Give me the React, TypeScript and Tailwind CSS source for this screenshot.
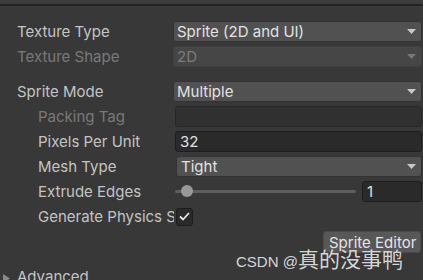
import React from "react";

const Arrow = ({ color }: { color: string }) => (
  <svg width="9" height="5" viewBox="0 0 9 5" className="shrink-0">
    <polygon points="0,0 9,0 4.5,5" fill={color} />
  </svg>
);

const Dropdown = ({ text, disabled, pl }: { text: string; disabled?: boolean; pl?: string }) => (
  <div
    className={
      "flex-1 mr-[1px] h-[21px] rounded-[3px] border flex items-center pr-[5px] " +
      (disabled
        ? "bg-[#464646] border-[#404040] text-[#7c7c7c]"
        : "bg-[#515151] border-[#333333] text-[#e2e2e2]") +
      " " +
      (pl ?? "pl-[3px]")
    }
  >
    <span className="flex-1 whitespace-nowrap">{text}</span>
    <Arrow color={disabled ? "#777777" : "#c8c8c8"} />
  </div>
);

const TextField = ({ text, dim }: { text: string; dim?: boolean }) => (
  <div
    className={
      "flex-1 mr-[1px] h-[21px] rounded-[3px] border flex items-center pl-[4px] text-[#e0e0e0] " +
      (dim ? "bg-[#303030] border-[#262626]" : "bg-[#2a2a2a] border-[#1d1d1d]")
    }
  >
    {text}
  </div>
);

export default function App() {
  return (
    <div
      className="relative w-[423px] h-[280px] overflow-hidden bg-[#383838] text-[15px] leading-[21px]"
      style={{ fontFamily: "Inter, 'Noto Sans', sans-serif" }}
    >
      <div className="h-[4px] bg-[#3c3c3c]" />
      <div className="h-[2px] bg-[#232323]" />

      <div className="pt-[15px] flex flex-col gap-[4px]">
        <div className="flex items-center h-[21px]">
          <div className="w-[173px] shrink-0 pl-[17px] text-[#c4c4c4] whitespace-nowrap">Texture Type</div>
          <Dropdown text="Sprite (2D and UI)" />
        </div>
        <div className="flex items-center h-[21px]">
          <div className="w-[173px] shrink-0 pl-[17px] text-[#7a7a7a] whitespace-nowrap">Texture Shape</div>
          <Dropdown text="2D" disabled />
        </div>
      </div>

      <div className="mt-[14px] flex flex-col gap-[4px]">
        <div className="flex items-center h-[21px]">
          <div className="w-[173px] shrink-0 pl-[17px] text-[#c4c4c4] whitespace-nowrap">Sprite Mode</div>
          <Dropdown text="Multiple" />
        </div>
        <div className="flex items-center h-[21px]">
          <div className="w-[175px] shrink-0 pl-[38px] text-[#7a7a7a] whitespace-nowrap">Packing Tag</div>
          <TextField text="" dim />
        </div>
        <div className="flex items-center h-[21px]">
          <div className="w-[175px] shrink-0 pl-[38px] text-[#c4c4c4] whitespace-nowrap">Pixels Per Unit</div>
          <TextField text="32" />
        </div>
        <div className="flex items-center h-[21px]">
          <div className="w-[176px] shrink-0 pl-[38px] text-[#c4c4c4] whitespace-nowrap">Mesh Type</div>
          <Dropdown text="Tight" pl="pl-[4px]" />
        </div>
        <div className="flex items-center h-[21px]">
          <div className="w-[175px] shrink-0 pl-[38px] text-[#c4c4c4] whitespace-nowrap">Extrude Edges</div>
          <div className="relative flex-1 h-[21px] flex items-center">
            <div className="w-full h-[3px] rounded-full bg-[#5e5e5e]" />
            <div className="absolute left-[6px] top-[4px] w-[12px] h-[12px] rounded-full bg-[#999999]" />
          </div>
          <div className="w-[60px] ml-[6px] mr-[1px] h-[21px] rounded-[3px] border bg-[#2a2a2a] border-[#1d1d1d] flex items-center pl-[4px] text-[#e0e0e0]">
            1
          </div>
        </div>
        <div className="flex items-center h-[21px]">
          <div className="w-[174px] shrink-0 pl-[38px] text-[#c4c4c4] whitespace-nowrap overflow-hidden">
            Generate Physics Shape
          </div>
          <div className="ml-[2px] w-[17px] h-[18px] rounded-[3px] border border-[#1d1d1d] bg-[#2a2a2a] flex items-center justify-center">
            <svg width="11" height="9" viewBox="0 0 11 9">
              <polyline points="1,4.5 4,7.5 10,1" fill="none" stroke="#e6e6e6" strokeWidth="1.8" />
            </svg>
          </div>
        </div>
        <div className="flex h-[22px]">
          <div className="ml-auto mr-[2px] w-[98px] h-[22px] rounded-[3px] bg-[#585858] border border-[#4a4a4a] flex items-center pl-[5px] text-[#e4e4e4] whitespace-nowrap">
            Sprite Editor
          </div>
        </div>
      </div>

      <div className="mt-[13px] flex items-center h-[21px]">
        <svg width="8" height="9" viewBox="0 0 8 9" className="ml-[3px] mt-[3px]">
          <polygon points="0,0 7,4.5 0,9" fill="#8a8a8a" />
        </svg>
        <span className="ml-[6px] text-[#c4c4c4]">Advanced</span>
      </div>

      <div
        className="absolute left-[236px] top-[246px] flex items-baseline text-[#d6d6d6] whitespace-nowrap leading-[24px]"
      >
        <span className="text-[15px]" style={{ fontFamily: "'Liberation Sans', sans-serif" }}>CSDN @</span>
        <span className="text-[21px]" style={{ fontFamily: "'Noto Sans CJK SC', sans-serif" }}>真的没事鸭</span>
      </div>
    </div>
  );
}
